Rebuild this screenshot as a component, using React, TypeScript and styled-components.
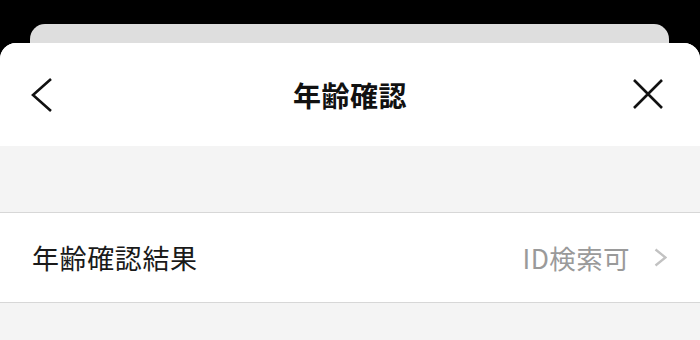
import styled, { createGlobalStyle } from "styled-components";

// ------ Global ------ //
const GlobalStyle = createGlobalStyle`
  html, body {
    margin: 0;
    padding: 0;
    background-color: #000;
  }
  body {
    font-family: "Noto Sans CJK JP", "Noto Sans", sans-serif;
    -webkit-font-smoothing: antialiased;
  }
`;

// ------ Styled ------ //
const Screen = styled.div`
  display: flex;
  flex-direction: column;
  min-height: 100vh;
  padding-top: 24px;
  box-sizing: border-box;
`;
const BackSheet = styled.div`
  height: 19px;
  margin: 0 31px 0 30px;
  background-color: #dedede;
  border-radius: 15px 15px 0 0;
`;
const Sheet = styled.div`
  flex: 1;
  display: flex;
  flex-direction: column;
  background-color: #f4f4f4;
  border-radius: 16px 16px 0 0;
  overflow: hidden;
`;
const Header = styled.header`
  display: grid;
  grid-template-columns: 50px 1fr 50px;
  align-items: center;
  height: 103px;
  padding: 0 22px;
  background-color: #fff;
`;
const IconButton = styled.button`
  display: flex;
  align-items: center;
  justify-content: center;
  width: 50px;
  height: 40px;
  padding: 0;
  border: none;
  background: none;
  color: #111;
`;
const Title = styled.h1`
  margin: 0;
  text-align: center;
  font-size: 28px;
  font-weight: 700;
  color: #111;
  letter-spacing: 0.5px;
`;
const Spacer = styled.div`
  height: 66px;
`;
const Row = styled.div`
  display: flex;
  align-items: center;
  justify-content: space-between;
  height: 89px;
  padding: 0 33px 0 32px;
  background-color: #fff;
  border-top: 1px solid #d7d7d7;
  border-bottom: 1px solid #d7d7d7;
`;
const Label = styled.span`
  font-size: 27px;
  font-weight: 400;
  color: #1a1a1a;
  letter-spacing: 0.6px;
`;
const Value = styled.div`
  display: flex;
  align-items: center;
  gap: 24px;
  font-size: 26.5px;
  color: #9a9a9a;
  letter-spacing: 0.4px;
`;

function BackIcon() {
  return (
    <svg width="50" height="40" viewBox="0 0 50 40" fill="none">
      <path d="M29 4 L11 20 L29 36" stroke="currentColor" strokeWidth="2.6" />
    </svg>
  );
}

function CloseIcon() {
  return (
    <svg width="50" height="40" viewBox="0 0 50 40" fill="none">
      <path d="M6 5 L34 33 M34 5 L6 33" stroke="currentColor" strokeWidth="2.6" />
    </svg>
  );
}

function Chevron() {
  return (
    <svg width="13" height="19" viewBox="0 0 13 19" fill="none">
      <path d="M1.5 1.5 L11.5 9.5 L1.5 17.5" stroke="#c2c2c2" strokeWidth="2.3" />
    </svg>
  );
}

function App() {
  return (
    <>
      <GlobalStyle />
      <Screen>
        <BackSheet />
        <Sheet>
          <Header>
            <IconButton aria-label="戻る"><BackIcon /></IconButton>
            <Title>年齢確認</Title>
            <IconButton aria-label="閉じる"><CloseIcon /></IconButton>
          </Header>
          <Spacer />
          <Row>
            <Label>年齢確認結果</Label>
            <Value>
              ID検索可
              <Chevron />
            </Value>
          </Row>
        </Sheet>
      </Screen>
    </>
  );
}

export default App;
